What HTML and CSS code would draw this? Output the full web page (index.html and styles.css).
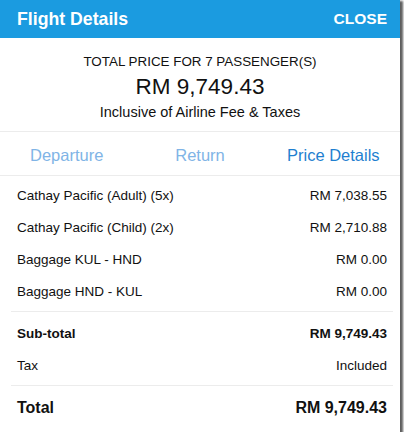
FILE: index.html
```html
<!DOCTYPE html>
<html>
<head>
<meta charset="utf-8">
<link rel="stylesheet" href="styles.css">
</head>
<body>
<div class="sheet">
  <header class="bar">
    <span class="bar-title">Flight Details</span>
    <span class="bar-close">CLOSE</span>
  </header>
  <section class="summary">
    <div class="summary-label">TOTAL PRICE FOR 7 PASSENGER(S)</div>
    <div class="summary-amount">RM 9,749.43</div>
    <div class="summary-note">Inclusive of Airline Fee &amp; Taxes</div>
  </section>
  <nav class="tabs">
    <span class="tab">Departure</span>
    <span class="tab">Return</span>
    <span class="tab tab-active">Price Details</span>
  </nav>
  <div class="rows">
    <div class="row"><span>Cathay Pacific (Adult) (5x)</span><span>RM 7,038.55</span></div>
    <div class="row"><span>Cathay Pacific (Child) (2x)</span><span>RM 2,710.88</span></div>
    <div class="row"><span>Baggage KUL - HND</span><span>RM 0.00</span></div>
    <div class="row"><span>Baggage HND - KUL</span><span>RM 0.00</span></div>
    <div class="divider"></div>
    <div class="row row-bold"><span>Sub-total</span><span>RM 9,749.43</span></div>
    <div class="row"><span>Tax</span><span>Included</span></div>
    <div class="divider divider-last"></div>
    <div class="row row-total"><span>Total</span><span>RM 9,749.43</span></div>
  </div>
</div>
</body>
</html>
```
FILE: styles.css
```css
html, body {
  margin: 0;
  padding: 0;
  background: #ffffff;
}
body {
  font-family: "Liberation Sans", Arial, sans-serif;
  color: #111;
}
.sheet {
  width: 400px;
  height: 432px;
  background: #fff;
  box-shadow: 2px 2px 2px 1px rgba(40,40,40,0.75);
  display: flex;
  flex-direction: column;
  overflow: hidden;
}
.bar {
  height: 38px;
  background: #1b9be0;
  color: #fff;
  display: flex;
  align-items: center;
  justify-content: space-between;
  padding: 0 13px 0 17px;
  font-weight: bold;
  flex-shrink: 0;
}
.bar-title {
  font-size: 17.7px;
}
.bar-close {
  font-size: 15.5px;
}
.summary {
  display: flex;
  flex-direction: column;
  align-items: center;
  height: 94px;
  border-bottom: 1px solid #ececec;
  box-sizing: border-box;
  padding-top: 15px;
}
.summary-label {
  font-size: 13.4px;
  line-height: 18px;
}
.summary-amount {
  font-size: 22.5px;
  line-height: 28px;
  margin-top: 2px;
}
.summary-note {
  font-size: 14.5px;
  line-height: 18px;
  margin-top: 2px;
}
.tabs {
  display: grid;
  grid-template-columns: repeat(3, 1fr);
  height: 44px;
  padding-top: 4px;
  align-items: center;
  border-bottom: 1px solid #ececec;
  box-sizing: border-box;
}
.tab {
  text-align: center;
  font-size: 16.5px;
  color: #80b4e6;
}
.tab-active {
  color: #1f7fd0;
}
.rows {
  display: flex;
  flex-direction: column;
  padding: 3px 0 0;
}
.row {
  display: flex;
  justify-content: space-between;
  height: 32px;
  align-items: center;
  padding: 0 13px 0 17px;
  font-size: 13.5px;
}
.divider {
  height: 1px;
  background: #ececec;
  margin: 4px 7px 5px 11px;
}
.divider-last {
  margin-bottom: 3px;
}
.row-bold {
  font-weight: bold;
}
.row-total {
  font-weight: bold;
  font-size: 16px;
  height: 38px;
}
```
